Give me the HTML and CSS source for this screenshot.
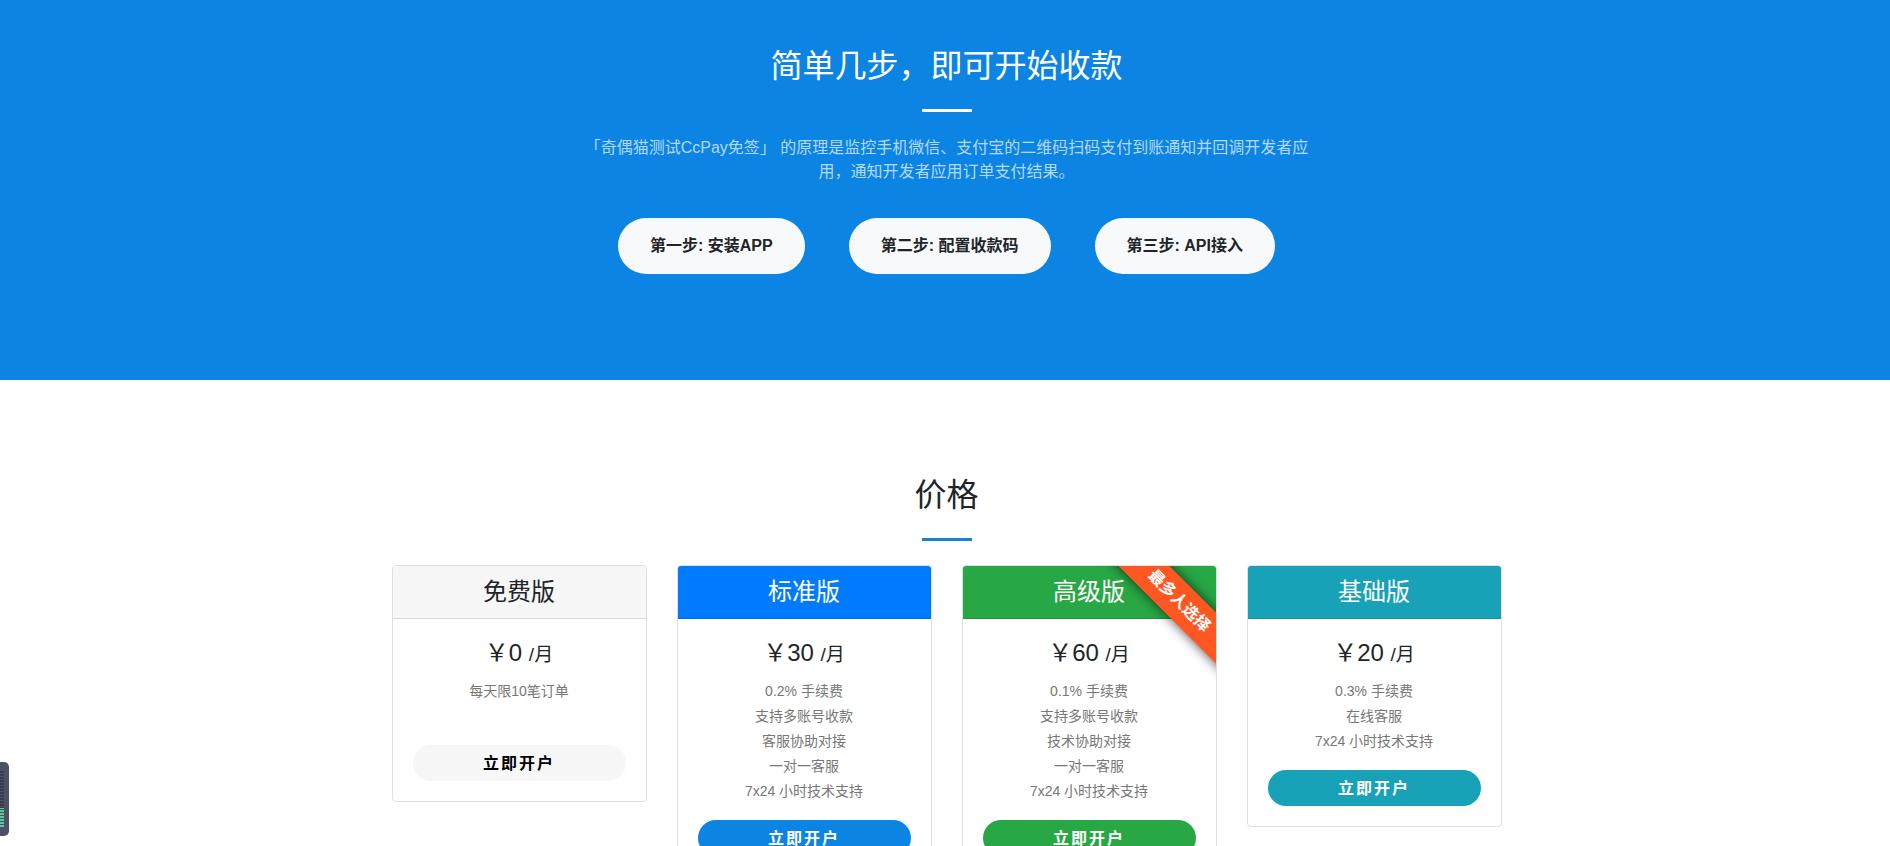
FILE: index.html
```html
<!DOCTYPE html>
<html lang="zh-CN">
<head>
    <meta charset="UTF-8">
    <meta name="viewport" content="width=device-width, initial-scale=1.0">
    <title>CcPay</title>
    <link rel="stylesheet" href="styles.css">
</head>
<body>
    <section class="steps">
        <div class="steps-inner">
            <h2 class="section-title">简单几步，即可开始收款</h2>
            <hr class="divider light">
            <p class="steps-text">「奇偶猫测试CcPay免签」 的原理是监控手机微信、支付宝的二维码扫码支付到账通知并回调开发者应用，通知开发者应用订单支付结果。</p>
            <div class="step-buttons">
                <a class="step-button" href="#">第一步: 安装APP</a>
                <a class="step-button" href="#">第二步: 配置收款码</a>
                <a class="step-button" href="#">第三步: API接入</a>
            </div>
        </div>
    </section>

    <section class="pricing">
        <h2 class="section-title">价格</h2>
        <hr class="divider">
        <div class="cards">
            <div class="card free">
                <h4 class="card-header">免费版</h4>
                <div class="card-body">
                    <div class="price">￥0 <small>/月</small></div>
                    <ul class="features">
                        <li>每天限10笔订单</li>
                        <li></li>
                    </ul>
                    <button class="open-button" type="button">立即开户</button>
                </div>
            </div>
            <div class="card standard">
                <h4 class="card-header">标准版</h4>
                <div class="card-body">
                    <div class="price">￥30 <small>/月</small></div>
                    <ul class="features">
                        <li>0.2% 手续费</li>
                        <li>支持多账号收款</li>
                        <li>客服协助对接</li>
                        <li>一对一客服</li>
                        <li>7x24 小时技术支持</li>
                    </ul>
                    <button class="open-button" type="button">立即开户</button>
                </div>
            </div>
            <div class="card premium">
                <h4 class="card-header">高级版</h4>
                <div class="ribbon">最多人选择</div>
                <div class="card-body">
                    <div class="price">￥60 <small>/月</small></div>
                    <ul class="features">
                        <li>0.1% 手续费</li>
                        <li>支持多账号收款</li>
                        <li>技术协助对接</li>
                        <li>一对一客服</li>
                        <li>7x24 小时技术支持</li>
                    </ul>
                    <button class="open-button" type="button">立即开户</button>
                </div>
            </div>
            <div class="card basic">
                <h4 class="card-header">基础版</h4>
                <div class="card-body">
                    <div class="price">￥20 <small>/月</small></div>
                    <ul class="features">
                        <li>0.3% 手续费</li>
                        <li>在线客服</li>
                        <li>7x24 小时技术支持</li>
                    </ul>
                    <button class="open-button" type="button">立即开户</button>
                </div>
            </div>
        </div>
    </section>

    <div class="meter"><div class="meter-bars"></div></div>
</body>
</html>
```

FILE: styles.css
```css
* {
    box-sizing: border-box;
}
body {
    margin: 0;
    font-family: "Liberation Sans", "Noto Sans CJK SC", sans-serif;
    font-size: 16px;
    line-height: 24px;
    color: #212529;
    background: #fff;
}
.steps {
    background: #0c84e4;
    color: #fff;
    text-align: center;
    padding: 47px 0 106px 3px;
}
.steps-inner {
    max-width: 730px;
    margin: 0 auto;
}
.section-title {
    margin: 0;
    font-size: 32px;
    font-weight: 400;
    line-height: 38px;
    text-align: center;
}
.divider {
    width: 50px;
    height: 3px;
    margin: 24px auto;
    border: none;
    background: #1c80d2;
}
.divider.light {
    background: #fff;
}
.steps-text {
    margin: 0 0 34px;
    color: rgba(255, 255, 255, 0.7);
}
.step-buttons {
    display: flex;
    justify-content: center;
    flex-wrap: wrap;
    gap: 44px;
}
.step-button {
    padding: 16px 32px;
    border-radius: 28px;
    background: #f8f9fa;
    color: #212529;
    font-weight: 700;
    text-decoration: none;
}
.pricing {
    padding: 96px 0 96px 3px;
}
.cards {
    display: flex;
    align-items: flex-start;
    gap: 30px;
    max-width: 1140px;
    margin: 0 auto;
    padding: 0 15px;
}
.card {
    position: relative;
    flex: 1;
    overflow: hidden;
    border: 1px solid #dfdfdf;
    border-radius: 4px;
    text-align: center;
}
.card-header {
    margin: 0;
    padding: 12px;
    font-size: 24px;
    font-weight: 400;
    line-height: 28px;
    color: #fff;
    border-bottom: 1px solid rgba(0, 0, 0, 0.125);
}
.card-body {
    padding: 20px;
}
.price {
    margin-bottom: 10px;
    font-size: 24px;
    line-height: 28px;
}
.price small {
    font-size: 19px;
}
.features {
    margin: 0 0 16px;
    padding: 0;
    list-style: none;
    font-size: 14px;
    line-height: 25px;
    color: #777;
}
.features li {
    min-height: 25px;
}
.open-button {
    display: block;
    width: 100%;
    height: 36px;
    padding: 0 0 2px;
    border: none;
    border-radius: 18px;
    font-family: inherit;
    font-size: 16px;
    font-weight: 700;
    letter-spacing: 2px;
    color: #fff;
    cursor: pointer;
}
.free .card-header {
    background: #f7f7f7;
    color: #212529;
}
.free .open-button {
    background: #f7f7f7;
    color: #000;
}
.standard .card-header {
    background: #007bff;
}
.standard .open-button {
    background: #0c84e4;
}
.premium .card-header,
.premium .open-button {
    background: #28a745;
}
.basic .card-header,
.basic .open-button {
    background: #17a2b8;
}
.ribbon {
    position: absolute;
    top: 17px;
    right: -63px;
    width: 200px;
    padding: 6px 0;
    background: #ff5722;
    box-shadow: 0 0 12px rgba(0, 0, 0, 0.7);
    color: #fff;
    font-weight: 700;
    transform: rotate(45deg);
}
/* level meter docked on the left edge */
.meter {
    position: fixed;
    left: 0;
    bottom: 10px;
    width: 9px;
    height: 74px;
    padding: 9px 5px 8px 0;
    border-radius: 0 5px 5px 0;
    background: #4d5263;
}
.meter-bars {
    height: 100%;
    background:
        repeating-linear-gradient(transparent 0 2px, #4d5263 2px 3px),
        linear-gradient(#373d50 0 65%, #5ec48c 65%, #62c4b4 100%);
}
```
